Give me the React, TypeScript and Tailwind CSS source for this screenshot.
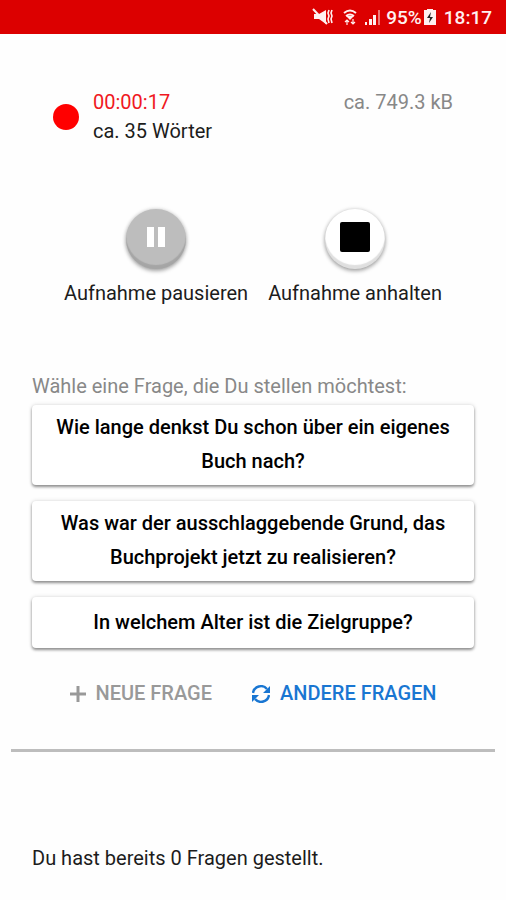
import type { ReactNode } from "react";

const questions = [
  "Wie lange denkst Du schon über ein eigenes Buch nach?",
  "Was war der ausschlaggebende Grund, das Buchprojekt jetzt zu realisieren?",
  "In welchem Alter ist die Zielgruppe?",
];

function StatusBar() {
  return (
    <header className="flex h-[34px] items-center justify-end bg-[#dc0000] px-3.5 text-[19px] font-medium text-[#fff0f0]">
      <svg viewBox="0 0 22 18" className="mr-2 h-[18px] w-[22px]" aria-hidden>
        <path d="M2 6h5l7-4v14l-7-5H2z" fill="#fff0f0" />
        <path d="M1 1l14 15" stroke="#fff0f0" strokeWidth="2" />
        <path d="M17 2l-1 3 1 3-1 3 1 4M20 2l-1 3 1 3-1 3 1 4" fill="none" stroke="#fff0f0" strokeWidth="1.6" />
      </svg>
      <svg viewBox="0 0 16 18" className="mr-1.5 h-[18px] w-4" aria-hidden>
        <path d="M2 5q6-5 12 0M4 8q4-3 8 0" fill="none" stroke="#fff0f0" strokeWidth="2" />
        <path d="M4 8h8l-4 4z" fill="#fff0f0" />
        <path d="M5 17v-5M3 14l2-2 2 2M11 11v5M9 14l2 2 2-2" fill="none" stroke="#fff0f0" strokeWidth="1.2" />
      </svg>
      <svg viewBox="0 0 18 18" className="mr-1 h-[18px] w-[18px]" aria-hidden>
        <path d="M1 14h2v3H1zM5 11h3v6H5zM9 7h3v10H9z" fill="#fff0f0" />
        <path d="M14 2h2v15h-2z" fill="#fff0f0" opacity="0.5" />
      </svg>
      <span>95%</span>
      <svg viewBox="0 0 12 18" className="mr-2 ml-0.5 h-[18px] w-3" aria-hidden>
        <path d="M3 1h6v1h3v15H0V2h3z" fill="#fff0f0" />
        <path d="M7 4L3 10h3l-1 5 4-6H6z" fill="#222" />
      </svg>
      <span>18:17</span>
    </header>
  );
}

function RecorderButton({ label, className, children }: { label: string; className: string; children: ReactNode }) {
  return (
    <label className="flex flex-col items-center gap-2.5">
      <button
        className={`flex size-15 items-center justify-center rounded-full pb-1 shadow-[inset_0_-4px_1px_#00000020,0_2px_4px_#00000055,0_0_4px_#00000022] ${className}`}
      >
        {children}
      </button>
      <span>{label}</span>
    </label>
  );
}

export default function App() {
  return (
    <div className="min-h-screen bg-[#fefefe] font-[Roboto,sans-serif] text-xl leading-[29px] text-[#1c1c1c]">
      <StatusBar />

      <main>
        <section className="flex items-center px-[53px] pt-[54px]">
          <span className="mr-3.5 size-[26px] rounded-full bg-[#ff0000]" />
          <div className="grow">
            <div className="flex justify-between">
              <span className="text-[#f01822]">00:00:17</span>
              <span className="text-[#888]">ca. 749.3 kB</span>
            </div>
            <p>ca. 35 Wörter</p>
          </div>
        </section>

        <section className="flex justify-center gap-5 pt-[63px]">
          <RecorderButton label="Aufnahme pausieren" className="bg-[#bdbdbd]">
            <svg viewBox="0 0 18 20" className="h-5 w-[18px]" aria-hidden>
              <path d="M0 0h7v20H0zM11 0h7v20h-7z" fill="#fff" />
            </svg>
          </RecorderButton>
          <RecorderButton label="Aufnahme anhalten" className="bg-white">
            <span className="size-[30px] rounded-xs bg-black" />
          </RecorderButton>
        </section>

        <section className="px-8 pt-16">
          <h2 className="mb-1 text-[#888]">Wähle eine Frage, die Du stellen möchtest:</h2>
          <ul className="flex flex-col gap-4">
            {questions.map((question) => (
              <li key={question}>
                <button className="w-full rounded-sm bg-white px-6 pt-[5px] pb-[7px] leading-[34px] font-medium text-black shadow-[0_2px_3px_#00000066,0_0_4px_#00000026] last:min-h-[51px]">
                  {question}
                </button>
              </li>
            ))}
          </ul>
        </section>

        <section className="flex justify-center gap-10 pt-[31px] font-medium">
          <button className="flex items-center gap-2.5 text-[#999]">
            <svg viewBox="0 0 16 16" className="size-4" aria-hidden>
              <path d="M8 0v16M0 8h16" stroke="currentColor" strokeWidth="3" />
            </svg>
            NEUE FRAGE
          </button>
          <button className="flex items-center gap-2.5 text-[#1976d2]">
            <svg viewBox="0 0 18 18" className="size-[18px]" aria-hidden>
              <path d="M1 8a8 8 0 0 1 14-4M17 10a8 8 0 0 1-14 4" fill="none" stroke="currentColor" strokeWidth="2.4" />
              <path d="M18 1v7h-7zM0 17v-7h7z" fill="currentColor" />
            </svg>
            ANDERE FRAGEN
          </button>
        </section>

        <hr className="mx-[11px] mt-[41px] border-t-[3px] border-[#bdbdbd]" />

        <p className="px-8 pt-[92px]">Du hast bereits 0 Fragen gestellt.</p>
      </main>
    </div>
  );
}
